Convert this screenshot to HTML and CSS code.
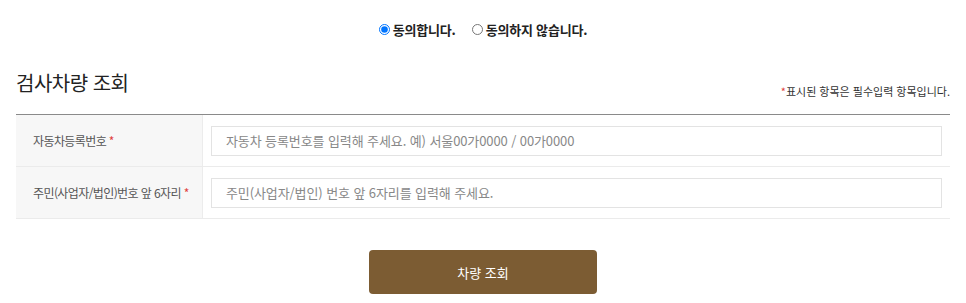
FILE: index.html
```html
<!DOCTYPE html>
<html lang="ko">
<head>
<meta charset="utf-8">
<link rel="stylesheet" href="styles.css">
</head>
<body>
<div class="page">
  <div class="agree">
    <label class="radio"><input type="radio" name="agree" checked><span>동의합니다.</span></label>
    <label class="radio"><input type="radio" name="agree"><span>동의하지 않습니다.</span></label>
  </div>
  <div class="head">
    <h2 class="title">검사차량 조회</h2>
    <p class="note"><span class="req">*</span>표시된 항목은 필수입력 항목입니다.</p>
  </div>
  <div class="table">
    <div class="row">
      <div class="th"><span>자동차등록번호 <span class="req">*</span></span></div>
      <div class="td"><input class="field" type="text" placeholder="자동차 등록번호를 입력해 주세요. 예) 서울00가0000 / 00가0000"></div>
    </div>
    <div class="row">
      <div class="th"><span>주민(사업자/법인)번호 앞 6자리 <span class="req">*</span></span></div>
      <div class="td"><input class="field" type="text" placeholder="주민(사업자/법인) 번호 앞 6자리를 입력해 주세요."></div>
    </div>
  </div>
  <div class="actions">
    <button class="btn" type="button">차량 조회</button>
  </div>
</div>
</body>
</html>
```
FILE: styles.css
```css
* { box-sizing: border-box; }
body {
  margin: 0;
  font-family: "Noto Sans CJK KR", "Noto Sans", sans-serif;
  color: #222;
  background: #fff;
}
.page { padding: 0 16px; }
.agree {
  display: flex;
  justify-content: center;
  gap: 16px;
  padding-top: 20px;
  height: 40px;
}
.radio {
  display: flex;
  align-items: center;
  font-size: 13px;
  font-weight: bold;
  color: #222;
  height: 18px;
  letter-spacing: -0.2px;
}
.radio input {
  margin: 0 3px 0 0;
  width: 11px;
  height: 11px;
}
.head {
  display: flex;
  justify-content: space-between;
  align-items: flex-end;
  height: 74px;
  padding-bottom: 17px;
}
.title {
  margin: 0;
  font-size: 20px;
  font-weight: normal;
  line-height: 28px;
  color: #222;
  letter-spacing: -0.5px;
}
.note {
  margin: 0;
  font-size: 11px;
  color: #333;
  line-height: 16px;
  margin-bottom: -2px;
}
.req { color: #e0413e; }
.table { border-top: 1px solid #8a8a8a; }
.row {
  display: flex;
  height: 52px;
  border-bottom: 1px solid #ebebeb;
}
.th {
  width: 187px;
  background: #f7f7f7;
  border-right: 1px solid #ececec;
  display: flex;
  align-items: center;
  padding-left: 17px;
  font-size: 12px;
  color: #555;
  letter-spacing: -0.6px;
}
.td {
  flex: 1;
  display: flex;
  align-items: center;
  padding: 0 8px;
}
.field {
  width: 100%;
  height: 30px;
  border: 1px solid #e3e3e3;
  padding: 0 14px;
  font-family: inherit;
  font-size: 13px;
  color: #333;
  letter-spacing: -0.1px;
  outline: none;
}
.field::placeholder { color: #888; }
.actions {
  display: flex;
  justify-content: center;
  padding-top: 31px;
}
.btn {
  width: 228px;
  height: 44px;
  border: 0;
  border-radius: 4px;
  background: #7c5c33;
  color: #fff;
  font-family: inherit;
  font-size: 13px;
}
```
